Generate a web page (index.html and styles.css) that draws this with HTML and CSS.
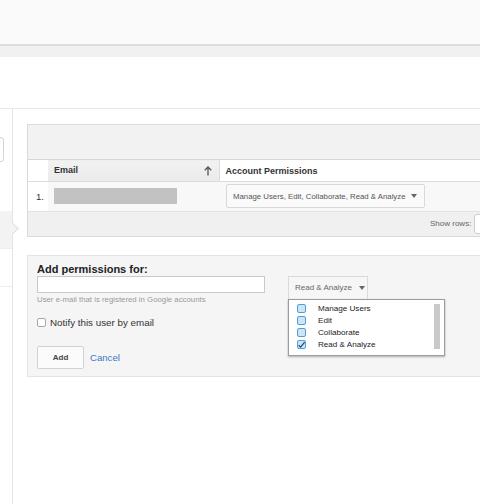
FILE: index.html
```html
<!doctype html>
<html>

<head>
    <meta charset="UTF-8" />
    <meta name="viewport" content="width=device-width, initial-scale=1.0" />
    <link rel="stylesheet" href="styles.css">
</head>

<body>
    <div class="topbar"></div>
    <div class="subbar"></div>
    <div class="page">
        <aside class="sidebar">
            <div class="sidebar__btn"></div>
            <div class="sidebar__item sidebar__item--active"></div>
            <div class="sidebar__item"></div>
        </aside>
        <main class="content">
            <div class="users">
                <div class="users__toolbar"></div>
                <table class="users__table">
                    <thead>
                        <tr>
                            <th class="col-num"></th>
                            <th class="col-email">
                                <span>Email</span>
                                <svg class="sort-arrow" width="8" height="10" viewBox="0 0 8 10">
                                    <path d="M4 9.5V1.2M0.8 4.2L4 1l3.2 3.2" fill="none" stroke="#555" stroke-width="1.3" />
                                </svg>
                            </th>
                            <th class="col-perms">Account Permissions</th>
                        </tr>
                    </thead>
                    <tbody>
                        <tr>
                            <td class="col-num">1.</td>
                            <td class="col-email"><span class="redacted"></span></td>
                            <td class="col-perms">
                                <button class="select">
                                    <span>Manage Users, Edit, Collaborate, Read &amp; Analyze</span>
                                    <span class="caret"></span>
                                </button>
                            </td>
                        </tr>
                    </tbody>
                </table>
                <div class="users__footer">
                    <span>Show rows:</span>
                    <span class="rows-select"></span>
                </div>
            </div>

            <div class="add">
                <h2 class="add__title">Add permissions for:</h2>
                <div class="add__row">
                    <div class="add__form">
                        <input class="add__input" type="text" />
                        <p class="add__hint">User e-mail that is registered in Google accounts</p>
                        <label class="notify">
                            <span class="checkbox"></span>
                            Notify this user by email
                        </label>
                        <div class="add__actions">
                            <button class="add__button">Add</button>
                            <a class="add__cancel" href="#">Cancel</a>
                        </div>
                    </div>
                    <div class="perm-picker">
                        <button class="perm-picker__button">
                            Read &amp; Analyze
                            <span class="caret"></span>
                        </button>
                        <div class="perm-list">
                            <ul class="perm-list__items">
                                <li><span class="perm-check"></span>Manage Users</li>
                                <li><span class="perm-check"></span>Edit</li>
                                <li><span class="perm-check"></span>Collaborate</li>
                                <li>
                                    <span class="perm-check">
                                        <svg width="8" height="8" viewBox="0 0 8 8">
                                            <path d="M0.8 4.2L3 6.4L7.6 0.8" fill="none" stroke="#1d4d82" stroke-width="1.5" />
                                        </svg>
                                    </span>Read &amp; Analyze
                                </li>
                            </ul>
                            <div class="perm-list__scroll"></div>
                        </div>
                    </div>
                </div>
            </div>
        </main>
    </div>
</body>

</html>
```

FILE: styles.css
```css
* {
    margin: 0;
    padding: 0;
    box-sizing: border-box;
}

html,
body {
    overflow: hidden;
}

body {
    background-color: #fff;
    color: #333;
    font-family: "Liberation Sans", Arial, sans-serif;
    font-size: 10px;
    width: 480px;
    height: 504px;
}

button {
    font-family: inherit;
}

.topbar {
    height: 46px;
    background-color: #fafafa;
    border-bottom: 2px solid #dedede;
}

.subbar {
    height: 11px;
    background-color: #f1f1f1;
}

.page {
    margin-top: 51px;
    border-top: 1px solid #e8e8e8;
    display: flex;
    height: 400px;
}

.sidebar {
    width: 13px;
    flex-shrink: 0;
    border-right: 1px solid #e3e3e3;
}

.sidebar__btn {
    margin-top: 28px;
    margin-left: -40px;
    width: 44px;
    height: 25px;
    border: 1px solid #d4d4d4;
    border-radius: 3px;
    background-color: #fff;
}

.sidebar__item {
    height: 38px;
    border-bottom: 1px solid #eee;
}

.sidebar__item--active {
    margin-top: 49px;
    background-color: #f3f3f3;
    position: relative;
}

.sidebar__item--active::after {
    content: "";
    position: absolute;
    right: -5px;
    top: 13px;
    width: 8px;
    height: 8px;
    background-color: #f3f3f3;
    border-top: 1px solid #e0e0e0;
    border-right: 1px solid #e0e0e0;
    transform: rotate(45deg);
}

.content {
    flex: 1;
    padding-left: 14px;
    overflow: hidden;
}

/* users table */

.users {
    margin-top: 15px;
    width: 480px;
    background-color: #f2f2f2;
    border: 1px solid #dadada;
}

.users__toolbar {
    height: 34px;
}

.users__table {
    width: 100%;
    border-collapse: collapse;
    table-layout: fixed;
}

.users__table th,
.users__table td {
    text-align: left;
    vertical-align: middle;
}

.users__table th {
    height: 22px;
    font-size: 9px;
    font-weight: bold;
    color: #333;
    border-top: 1px solid #d6d6d6;
    border-bottom: 1px solid #dcdcdc;
    background-color: #fff;
}

.users__table td {
    height: 29px;
    background-color: #f8f8f8;
}

.users__table .col-num {
    width: 20px;
    background-color: #fff;
    padding-left: 8px;
    font-size: 9.5px;
    color: #333;
}

.users__table .col-email {
    width: 171px;
    padding-left: 6px;
}

.users__table th.col-email {
    background: linear-gradient(#f2f2f2, #eaeaea);
    border-right: 1px solid #dcdcdc;
}

.sort-arrow {
    float: right;
    margin-right: 7px;
    margin-top: 1px;
}

.users__table th.col-perms {
    padding-left: 6px;
}

.users__table td.col-perms {
    padding-left: 7px;
}

.redacted {
    display: block;
    width: 123px;
    height: 16px;
    background-color: #c2c2c2;
}

.select {
    width: 199px;
    height: 24px;
    display: flex;
    align-items: center;
    justify-content: space-between;
    padding: 0 7px 0 6px;
    font-size: 7.8px;
    color: #555;
    white-space: nowrap;
    background-color: #fafafa;
    border: 1px solid #d8d8d8;
    border-radius: 2px;
}

.caret {
    flex-shrink: 0;
    width: 0;
    height: 0;
    border-left: 3px solid transparent;
    border-right: 3px solid transparent;
    border-top: 4px solid #666;
}

.users__footer {
    height: 25px;
    border-top: 1px solid #e2e2e2;
    background-color: #f0f0f0;
    display: flex;
    align-items: center;
    gap: 3px;
    padding-left: 402px;
    font-size: 8px;
    color: #666;
    white-space: nowrap;
}

.rows-select {
    width: 30px;
    height: 20px;
    flex-shrink: 0;
    background-color: #fff;
    border: 1px solid #cfcfcf;
    border-radius: 3px;
}

/* add permissions */

.add {
    margin-top: 18px;
    width: 480px;
    background-color: #f5f5f5;
    border: 1px solid #e4e4e4;
    padding: 6px 9px 7px;
}

.add__title {
    font-size: 11px;
    line-height: 14px;
    font-weight: bold;
    color: #222;
}

.add__row {
    display: flex;
    gap: 23px;
}

.add__form {
    width: 228px;
}

.add__input {
    display: block;
    width: 228px;
    height: 17px;
    border: 1px solid #c9c9c9;
    background-color: #fff;
}

.add__hint {
    margin-top: 2px;
    font-size: 7.8px;
    line-height: 10px;
    color: #9a9a9a;
}

.notify {
    margin-top: 11px;
    display: flex;
    align-items: center;
    gap: 4px;
    font-size: 9.8px;
    line-height: 14px;
    color: #333;
}

.checkbox {
    width: 9px;
    height: 9px;
    border: 1px solid #a8a8a8;
    border-radius: 2px;
    background-color: #fff;
}

.add__actions {
    margin-top: 16px;
    display: flex;
    align-items: center;
    gap: 6px;
}

.add__button {
    width: 47px;
    height: 23px;
    font-size: 8px;
    font-weight: bold;
    color: #444;
    background-color: #fbfbfb;
    border: 1px solid #d2d2d2;
    border-radius: 2px;
}

.add__cancel {
    font-size: 9.6px;
    color: #3b78bf;
    text-decoration: none;
}

.perm-picker {
    width: 157px;
}

.perm-picker__button {
    width: 80px;
    height: 23px;
    display: flex;
    align-items: center;
    gap: 7px;
    padding-left: 6px;
    font-size: 8px;
    color: #666;
    white-space: nowrap;
    background-color: #f6f6f6;
    border: 1px solid #dadada;
    border-bottom: none;
}

.perm-list {
    display: flex;
    height: 57px;
    background-color: #fff;
    border: 1px solid #9c9c9c;
    box-shadow: 0 1px 2px rgba(0, 0, 0, 0.3);
}

.perm-list__items {
    flex: 1;
    list-style: none;
    padding-top: 3px;
}

.perm-list__items li {
    display: flex;
    align-items: center;
    height: 12px;
    padding-left: 8px;
    font-size: 8.1px;
    color: #222;
}

.perm-check {
    width: 9px;
    height: 9px;
    margin-right: 12px;
    border: 1px solid #4f9fd6;
    border-radius: 2px;
    background-color: #cce6f7;
    display: flex;
    align-items: center;
    justify-content: center;
}

.perm-list__scroll {
    width: 6px;
    margin: 4px 4px 6px 0;
    background-color: #c9c9c9;
}
```
